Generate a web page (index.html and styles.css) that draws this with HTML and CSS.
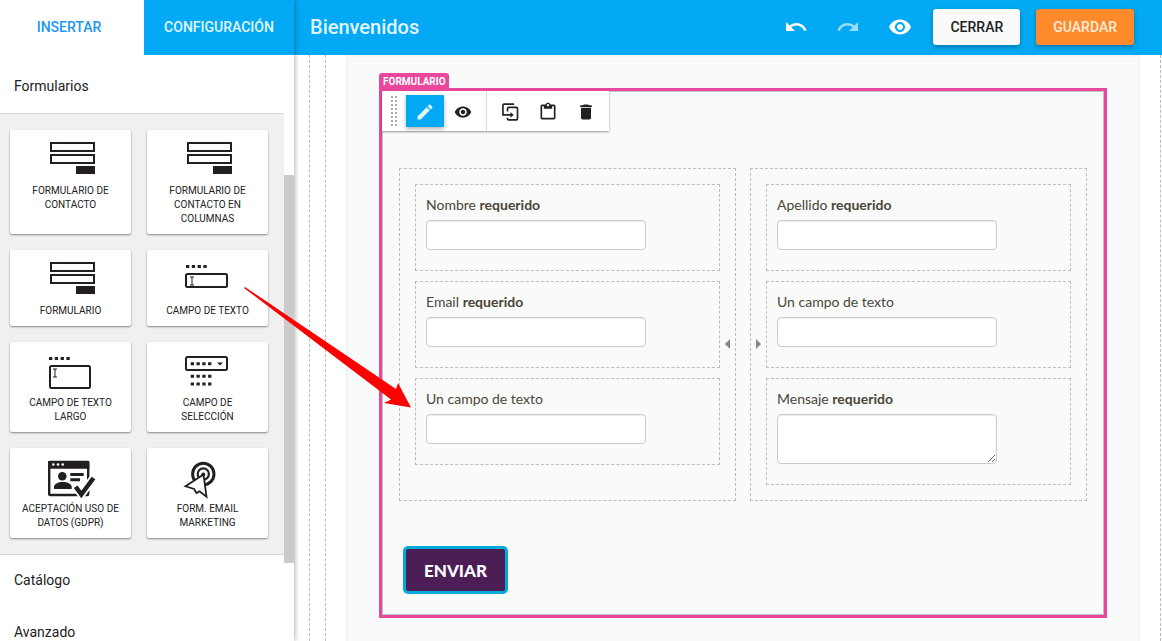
FILE: index.html
```html
<!DOCTYPE html>
<html lang="es">
<head>
    <meta charset="UTF-8">
    <meta name="viewport" content="width=device-width, initial-scale=1.0">
    <title>Bienvenidos</title>
    <link rel="stylesheet" href="styles.css">
</head>
<body>

<!-- Shapes used by more than one icon -->
<svg class="defs" aria-hidden="true">
    <symbol id="icon-form" viewBox="0 0 61 40">
        <rect x="11" y="5" width="43" height="8" fill="none" stroke="#231f20" stroke-width="2"/>
        <rect x="11" y="17" width="43" height="8" fill="none" stroke="#231f20" stroke-width="2"/>
        <rect x="36" y="28" width="19" height="8" fill="#231f20"/>
    </symbol>
    <symbol id="icon-eye" viewBox="0 0 24 24">
        <path d="M12 4.500C7 4.500 2.730 7.610 1 12c1.730 4.390 6 7.500 11 7.500s9.270-3.110 11-7.500c-1.730-4.390-6-7.500-11-7.500zM12 17c-2.760 0-5-2.240-5-5s2.240-5 5-5 5 2.240 5 5-2.240 5-5 5zm0-8c-1.660 0-3 1.340-3 3s1.340 3 3 3 3-1.340 3-3-1.340-3-3-3z"/>
    </symbol>
</svg>

<div class="editor">
    <aside class="sidebar">
        <nav class="tabs">
            <button class="tab active">INSERTAR</button>
            <button class="tab">CONFIGURACIÓN</button>
        </nav>
        <div class="panel">
            <div class="panel-content">
                <h2 class="section-title">Formularios</h2>
                <div class="widgets">
                    <button class="widget">
                        <svg class="widget-icon"><use href="#icon-form"/></svg>
                        FORMULARIO DE CONTACTO
                    </button>
                    <button class="widget">
                        <svg class="widget-icon"><use href="#icon-form"/></svg>
                        FORMULARIO DE CONTACTO EN COLUMNAS
                    </button>
                    <button class="widget">
                        <svg class="widget-icon"><use href="#icon-form"/></svg>
                        FORMULARIO
                    </button>
                    <button class="widget">
                        <svg class="widget-icon" viewBox="0 0 61 40">
                            <path d="M9 8.500h21" fill="none" stroke="#231f20" stroke-width="3" stroke-dasharray="3.300 2.500"/>
                            <rect x="9" y="16" width="41" height="13" rx="1.500" fill="none" stroke="#231f20" stroke-width="2"/>
                            <path d="M13 19h4M15 19v8M13 27h4" fill="none" stroke="#231f20" stroke-width="1"/>
                        </svg>
                        CAMPO DE TEXTO
                    </button>
                    <button class="widget">
                        <svg class="widget-icon" viewBox="0 0 61 40">
                            <path d="M9 8.500h21" fill="none" stroke="#231f20" stroke-width="3" stroke-dasharray="3.300 2.500"/>
                            <rect x="10" y="16" width="40" height="22" rx="1.500" fill="none" stroke="#231f20" stroke-width="2"/>
                            <path d="M13 19h4M15 19v8M13 27h4" fill="none" stroke="#231f20" stroke-width="1"/>
                        </svg>
                        CAMPO DE TEXTO LARGO
                    </button>
                    <button class="widget">
                        <svg class="widget-icon" viewBox="0 0 61 40">
                            <rect x="9" y="7" width="41" height="13" rx="1.500" fill="none" stroke="#231f20" stroke-width="2"/>
                            <path d="M13.700 13.700h21M13.700 26.200h21M13.700 34h21" fill="none" stroke="#231f20" stroke-width="3" stroke-dasharray="3.300 2.500"/>
                            <path d="M40 12.500h6l-3 3z" fill="#231f20"/>
                        </svg>
                        CAMPO DE SELECCIÓN
                    </button>
                    <button class="widget">
                        <svg class="widget-icon" viewBox="0 0 61 40">
                            <rect x="9.200" y="6" width="39" height="33" rx="1" fill="#fff" stroke="#231f20" stroke-width="2.400"/>
                            <path d="M8 5h41.300v7.700H8z" fill="#231f20"/>
                            <circle cx="13.300" cy="8.500" r="1.300" fill="#fff"/>
                            <circle cx="18" cy="8.500" r="1.300" fill="#fff"/>
                            <circle cx="22.700" cy="8.500" r="1.300" fill="#fff"/>
                            <circle cx="22.300" cy="20.300" r="4.300" fill="#231f20"/>
                            <path d="M14 33v-2c0-3 4-5 8.700-5s9 2 9 5v2z" fill="#231f20"/>
                            <path d="M30.300 18.500h13.400M30.300 23.700H40" stroke="#231f20" stroke-width="3"/>
                            <path d="M35.700 30.700L41.300 38.500L53.500 22" fill="none" stroke="#fff" stroke-width="8"/>
                            <path d="M35.700 30.700L41.300 38.500L53.500 22" fill="none" stroke="#231f20" stroke-width="4.500"/>
                        </svg>
                        ACEPTACIÓN USO DE DATOS (GDPR)
                    </button>
                    <button class="widget">
                        <svg class="widget-icon" viewBox="0 0 61 40">
                            <circle cx="26.300" cy="18" r="10.700" fill="none" stroke="#231f20" stroke-width="3"/>
                            <circle cx="26.300" cy="18" r="5.600" fill="none" stroke="#231f20" stroke-width="2.200"/>
                            <path d="M26.500 18.500L8.500 30.300l8.600 2.700 2.400 4 3-1.600 7 5.300z" fill="#fff" stroke="#231f20" stroke-width="1.800"/>
                            <circle cx="26.300" cy="18.500" r="2" fill="#231f20"/>
                        </svg>
                        FORM. EMAIL MARKETING
                    </button>
                </div>
                <h2 class="section-title">Catálogo</h2>
                <h2 class="section-title">Avanzado</h2>
            </div>
            <div class="scrollbar"><div class="scrollbar-thumb"></div></div>
        </div>
    </aside>

    <main class="main">
        <header class="topbar">
            <h1 class="page-title">Bienvenidos</h1>
            <div class="actions">
                <button class="icon-btn" aria-label="Deshacer">
                    <svg viewBox="0 0 24 24"><path d="M12.500 8c-2.650 0-5.050.990-6.900 2.600L2 7v9h9l-3.620-3.620c1.390-1.160 3.160-1.880 5.120-1.880 3.540 0 6.550 2.310 7.600 5.500l2.370-.780C21.080 11.030 17.150 8 12.500 8z"/></svg>
                </button>
                <button class="icon-btn disabled" aria-label="Rehacer">
                    <svg viewBox="0 0 24 24"><path d="M18.400 10.600C16.550 8.990 14.150 8 11.500 8c-4.650 0-8.580 3.030-9.960 7.220L3.900 16c1.050-3.190 4.050-5.500 7.600-5.500 1.950 0 3.730.720 5.120 1.880L13 16h9V7l-3.600 3.600z"/></svg>
                </button>
                <button class="icon-btn" aria-label="Vista previa">
                    <svg><use href="#icon-eye"/></svg>
                </button>
            </div>
            <div class="buttons">
                <button class="btn">CERRAR</button>
                <button class="btn btn-save">GUARDAR</button>
            </div>
        </header>

        <div class="canvas">
            <div class="outer-row">
                <div class="inner-row">
                    <div class="page">
                        <form class="form-block">
                            <span class="block-label">FORMULARIO</span>
                            <div class="toolbar">
                                <div class="tool-group">
                                    <span class="drag"></span>
                                    <button type="button" class="tool active" aria-label="Editar">
                                        <svg viewBox="0 0 24 24"><path d="M3 17.250V21h3.750L17.810 9.940l-3.750-3.750L3 17.250zM20.710 7.040c.390-.390.390-1.020 0-1.410l-2.340-2.340c-.390-.390-1.020-.390-1.410 0l-1.830 1.830 3.750 3.750 1.830-1.830z"/></svg>
                                    </button>
                                    <button type="button" class="tool" aria-label="Ver">
                                        <svg><use href="#icon-eye"/></svg>
                                    </button>
                                </div>
                                <div class="tool-group">
                                    <button type="button" class="tool" aria-label="Duplicar">
                                        <svg viewBox="0 0 24 24">
                                            <path d="M17 2.500H5a1.500 1.500 0 0 0-1.500 1.500v11.500h10M9 11.500V8a1.500 1.500 0 0 1 1.500-1.500h9A1.500 1.500 0 0 1 21 8v12a1.500 1.500 0 0 1-1.500 1.500h-9A1.500 1.500 0 0 1 9 20v-1" fill="none" stroke="#212121" stroke-width="2"/>
                                            <path d="M12.500 12l4 3.500-4 3.500z"/>
                                        </svg>
                                    </button>
                                    <button type="button" class="tool" aria-label="Pegar">
                                        <svg viewBox="0 0 24 24"><path d="M19 3h-4.180C14.400 1.840 13.300 1 12 1s-2.400.840-2.820 2H5c-1.100 0-2 .900-2 2v14c0 1.100.900 2 2 2h14c1.100 0 2-.900 2-2V5c0-1.100-.900-2-2-2zm-7-.500c.800 0 1.300.600 1.300 1.300S12.800 5 12 5s-1.300-.500-1.300-1.200.500-1.300 1.300-1.300zM19 19H5V5h2v3h10V5h2z"/></svg>
                                    </button>
                                    <button type="button" class="tool" aria-label="Eliminar">
                                        <svg viewBox="0 0 24 24"><path d="M6 19c0 1.100.900 2 2 2h8c1.100 0 2-.900 2-2V7H6v12zM19 4h-3.500l-1-1h-5l-1 1H5v2h14V4z"/></svg>
                                    </button>
                                </div>
                            </div>

                            <div class="columns">
                                <div class="column">
                                    <div class="field">
                                        <label for="nombre">Nombre <strong>requerido</strong></label>
                                        <input type="text" id="nombre">
                                    </div>
                                    <div class="field">
                                        <label for="email">Email <strong>requerido</strong></label>
                                        <input type="text" id="email">
                                    </div>
                                    <div class="field">
                                        <label for="texto1">Un campo de texto</label>
                                        <input type="text" id="texto1">
                                    </div>
                                    <span class="resize resize-left"></span>
                                </div>
                                <div class="column">
                                    <div class="field">
                                        <label for="apellido">Apellido <strong>requerido</strong></label>
                                        <input type="text" id="apellido">
                                    </div>
                                    <div class="field">
                                        <label for="texto2">Un campo de texto</label>
                                        <input type="text" id="texto2">
                                    </div>
                                    <div class="field">
                                        <label for="mensaje">Mensaje <strong>requerido</strong></label>
                                        <textarea id="mensaje"></textarea>
                                    </div>
                                    <span class="resize resize-right"></span>
                                </div>
                            </div>

                            <button type="button" class="send">ENVIAR</button>
                        </form>
                    </div>
                </div>
            </div>
        </div>
    </main>

    <!-- Arrow from the widget to its place in the form -->
    <svg class="arrow" viewBox="0 0 167 121" aria-hidden="true">
        <path d="M0 1L1 0L152 102L154 96L167 120.500L140 116L147 112.500Z" fill="#f00"/>
    </svg>
</div>

</body>
</html>
```
FILE: styles.css
```css
* {
    box-sizing: border-box;
}
body {
    margin: 0;
    font-family: Roboto, "Liberation Sans", sans-serif;
    color: #212121;
    background-color: #fff;
}
button {
    margin: 0;
    padding: 0;
    border: none;
    font-family: inherit;
    cursor: pointer;
}
.defs {
    display: none;
}
.editor {
    position: relative;
    display: flex;
    height: 100vh;
    overflow: hidden;
}

/* Sidebar */
.sidebar {
    position: relative;
    z-index: 1;
    display: flex;
    flex-direction: column;
    width: 294px;
    flex-shrink: 0;
    background-color: #fff;
    box-shadow: 0 0 6px rgba(0, 0, 0, 0.4);
}
.tabs {
    display: flex;
    height: 55px;
    flex-shrink: 0;
}
.tab {
    flex: 1 0 150px;
    padding-bottom: 2px;
    background-color: #03a9f4;
    color: #e1f5fe;
    font-size: 14px;
    font-weight: 500;
}
.tab.active {
    flex: 1 1 144px;
    padding-right: 6px;
    background-color: #fff;
    color: #2196f3;
}
.panel {
    display: flex;
    flex: 1;
    min-height: 0;
}
.panel-content {
    flex: 1;
    padding-top: 6px;
    overflow: hidden;
}
.section-title {
    margin: 0;
    padding: 0 14px 2px;
    font-size: 14px;
    font-weight: 400;
    line-height: 50px;
}
.widgets {
    display: grid;
    grid-template-columns: 1fr 1fr;
    gap: 16px;
    padding: 16px 16px 16px 10px;
    border-top: 1px solid #d8d8d8;
    border-bottom: 1px solid #d8d8d8;
    background-color: #f0f0f0;
}
.widget {
    display: flex;
    flex-direction: column;
    align-items: center;
    padding: 8px 10px;
    border-radius: 2px;
    background-color: #fff;
    box-shadow: 0 1px 2px rgba(0, 0, 0, 0.45);
    color: #212121;
    font-size: 10px;
    line-height: 14px;
    text-align: center;
}
.widget-icon {
    width: 61px;
    height: 40px;
    margin-bottom: 6px;
    flex-shrink: 0;
    overflow: visible;
}
.scrollbar {
    width: 10px;
    padding-top: 120px;
}
.scrollbar-thumb {
    height: 388px;
    background-color: #cacaca;
}

/* Top bar */
.main {
    display: flex;
    flex-direction: column;
    flex: 1;
    min-width: 0;
}
.topbar {
    display: flex;
    align-items: center;
    height: 55px;
    flex-shrink: 0;
    padding: 0 28px 2px 16px;
    background-color: #03a9f4;
}
.page-title {
    flex: 1;
    margin: 0;
    color: #e1f5fe;
    font-size: 20px;
    font-weight: 500;
}
.actions {
    display: flex;
    gap: 28px;
    margin-right: 21px;
}
.icon-btn {
    width: 24px;
    height: 24px;
    background: none;
    fill: #fff;
}
.icon-btn svg {
    display: block;
    width: 24px;
    height: 24px;
}
.icon-btn.disabled {
    opacity: 0.6;
}
.buttons {
    display: flex;
    gap: 16px;
}
.btn {
    height: 36px;
    padding: 0 17px;
    border-radius: 3px;
    background-color: #fafafa;
    box-shadow: 0 2px 5px rgba(0, 0, 0, 0.3);
    color: #212121;
    font-size: 14px;
    font-weight: 500;
}
.btn-save {
    background-color: #ff8a2b;
    color: #ffecdc;
}

/* Canvas */
.canvas {
    display: flex;
    flex: 1;
    overflow: hidden;
}
.outer-row {
    display: flex;
    flex: 1;
    margin: 0 -15px 0 15px;
    padding: 0 15px;
    border-left: 1px dashed #bdbdbd;
    border-right: 1px dashed #bdbdbd;
}
.inner-row {
    flex: 1;
    padding: 0 20px;
    border-left: 1px dashed #bdbdbd;
    border-right: 1px dashed #bdbdbd;
}
.page {
    min-height: 100%;
    padding: 31px;
    border: 2px solid #f2f3f3;
    border-bottom: none;
    background-color: #f9fbfb;
}
.form-block {
    position: relative;
    padding: 76px 16px 20px;
    border: 1px solid #bfc3c3;
    outline: 3px solid #e8479b;
    margin: 3px;
}
.block-label {
    position: absolute;
    left: -4px;
    top: -19px;
    padding: 0 3px 0 4px;
    border-radius: 3px 3px 0 0;
    background-color: #e8479b;
    color: #fff;
    font-size: 10px;
    font-weight: 700;
    line-height: 17px;
}
.toolbar {
    position: absolute;
    left: -1px;
    top: -1px;
    display: flex;
    height: 40px;
    background-color: #fff;
    box-shadow: 0 1px 2px rgba(0, 0, 0, 0.4);
}
.tool-group {
    display: flex;
    padding: 4px;
}
.tool-group + .tool-group {
    border-left: 1px solid #dcdcdc;
}
.drag {
    width: 6px;
    height: 30px;
    margin: 1px 9px 0 5px;
    background-image: repeating-linear-gradient(90deg, transparent 0 2px, #fff 2px 4px), repeating-linear-gradient(#adadad 0 2px, #fff 2px 4px);
}
.tool {
    display: flex;
    align-items: center;
    justify-content: center;
    width: 38px;
    height: 32px;
    padding-top: 2px;
    background: none;
    fill: #212121;
}
.tool svg {
    width: 18px;
    height: 18px;
}
.tool-group + .tool-group svg {
    width: 20px;
    height: 20px;
}
.tool.active {
    background-color: #03a9f4;
    box-shadow: 0 2px 4px rgba(0, 0, 0, 0.3);
    fill: #e1f5fe;
}
.tool.active svg {
    width: 20px;
    height: 20px;
}
.columns {
    display: flex;
    gap: 14px;
    margin-bottom: 45px;
}
.column {
    position: relative;
    display: flex;
    flex: 1;
    flex-direction: column;
    gap: 10px;
    padding: 15px;
    border: 1px dashed #bdbdbd;
}
.field {
    padding: 10px 10px 20px;
    border: 1px dashed #bdbdbd;
    color: #4b4537;
    font-family: Lato, "Liberation Sans", sans-serif;
    font-size: 14px;
    line-height: 20px;
}
.field label {
    display: block;
    margin-bottom: 5px;
}
.field input,
.field textarea {
    display: block;
    width: 220px;
    height: 30px;
    padding: 4px 6px;
    border: 1px solid #ccc;
    border-radius: 4px;
    background-color: #fff;
    box-shadow: inset 0 1px 1px rgba(0, 0, 0, 0.075);
    font-family: inherit;
}
.field textarea {
    height: 50px;
}
.resize {
    position: absolute;
    top: 50%;
    margin-top: 4px;
    border-top: 5px solid transparent;
    border-bottom: 5px solid transparent;
}
.resize-left {
    right: 5px;
    border-right: 5px solid #858786;
}
.resize-right {
    left: 5px;
    border-left: 5px solid #858786;
}
.send {
    display: block;
    height: 48px;
    margin-left: 4px;
    padding: 0 18px;
    border: 3px solid #00abdc;
    border-radius: 5px;
    background-color: #4b1e56;
    color: #fff;
    font-family: Lato, "Liberation Sans", sans-serif;
    font-size: 17px;
    font-weight: 900;
}

/* Drag arrow */
.arrow {
    position: absolute;
    z-index: 2;
    left: 244px;
    top: 287px;
    width: 167px;
    height: 121px;
    pointer-events: none;
}
```
